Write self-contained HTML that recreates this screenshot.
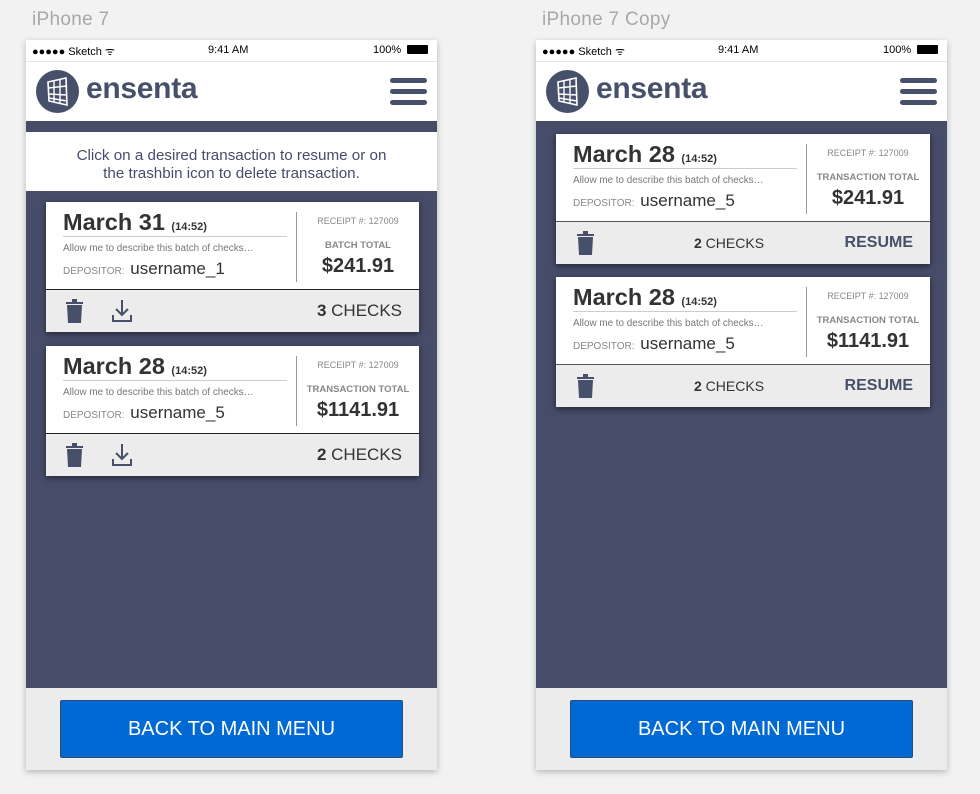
<!DOCTYPE html>
<html><head><meta charset="utf-8"><style>
*{margin:0;padding:0;box-sizing:border-box}
body{width:980px;height:794px;background:#f2f2f2;font-family:"Liberation Sans",Arial,sans-serif;position:relative;overflow:hidden}
.abs{position:absolute}
.lbl{font-size:19px;color:#a8a8a8;letter-spacing:.3px}
.phone{position:absolute;top:40px;width:411px;height:730px;background:#474c69;box-shadow:0 2px 6px rgba(0,0,0,.25)}
.sb{position:absolute;left:0;top:0;width:100%;height:22px;background:#fff;font-size:11px;color:#000;border-bottom:1px solid #e6e6e6}
.hdr{position:absolute;left:0;top:22px;width:100%;height:59px;background:#fff}
.logo{position:absolute;left:10px;top:8px;width:43px;height:43px;border-radius:50%;background:#47506a}
.brand{position:absolute;left:60px;top:10px;font-size:30px;font-weight:bold;color:#47506a;letter-spacing:-.3px}
.menu{position:absolute;right:10px;top:16px;width:37px}
.menu i{display:block;height:5px;border-radius:3px;background:#47506a;margin-bottom:6px}
.bottom{position:absolute;left:0;top:648px;width:100%;height:82px;background:#ececec}
.btn{position:absolute;left:34px;top:12px;width:343px;height:58px;background:#0069d3;border:1px solid #2a4d7a;border-radius:2px;color:#fff;font-size:20px;text-align:center;line-height:56px}
.card{position:absolute;width:373px;height:130px;background:#fff;box-shadow:0 2px 6px rgba(0,0,0,.5)}
.card .t{position:absolute;left:17px;top:7px;font-size:23.5px;font-weight:bold;color:#333}
.card .t small{font-size:11px}
.card .ul{position:absolute;left:17px;top:34px;width:224px;height:1px;background:#ccc}
.card .d{position:absolute;left:17px;top:41px;font-size:9.9px;color:#777}
.card .dep{position:absolute;left:17px;top:57px;font-size:10px;color:#888}
.card .dep b{font-size:17px;color:#333;font-weight:normal;margin-left:3px}
.card .vl{position:absolute;left:250px;top:10px;width:1px;height:70px;background:#999}
.card .r{position:absolute;left:251px;width:122px;text-align:center;color:#888}
.card .foot{position:absolute;left:0;top:87px;width:100%;height:43px;background:#ececec;border-top:1px solid #222}
.trash{position:absolute;top:9px;width:17px;height:24px}
.chk{position:absolute;font-size:17px;color:#333}
.ins{position:absolute;left:0;top:92px;width:100%;height:59px;background:#fff;text-align:center;font-size:15.2px;color:#474c69;line-height:18px;padding-top:15px}
</style></head><body>
<div class="abs lbl" style="left:32px;top:9px">iPhone 7</div>
<div class="abs lbl" style="left:542px;top:9px">iPhone 7 Copy</div>

<!-- phone 1 -->
<div class="phone" style="left:26px">
 <div class="sb"><span class="abs" style="left:6px;top:4px">●●●●● Sketch ᯤ</span><span class="abs" style="left:182px;top:4px">9:41 AM</span><span class="abs" style="left:347px;top:4px">100%</span><span class="abs" style="left:381px;top:5px;width:21px;height:9px;background:#000;border-radius:1px"></span></div>
 <div class="hdr"><div class="logo"><svg width="43" height="43" viewBox="0 0 43 43"><path d="M12 12 L30 8 L31 35 L13 31 Z" fill="none" stroke="#fff" stroke-width="1.6"/><path d="M18 11v21M24 9.5v24M12.3 18l18.3-2M12.6 24l18.5 1M12.8 28l18.3 3" stroke="#fff" stroke-width="1.4" fill="none"/></svg></div><div class="brand">ensenta</div><div class="menu"><i></i><i></i><i></i></div></div>
 <div class="ins">Click on a desired transaction to resume or on<br>the trashbin icon to delete transaction.</div>
 <div class="card" style="left:20px;top:162px">
  <div class="t">March 31 <small>(14:52)</small></div><div class="ul"></div>
  <div class="d">Allow me to describe this batch of checks…</div>
  <div class="dep">DEPOSITOR: <b>username_1</b></div><div class="vl"></div>
  <div class="r" style="top:14px;font-size:9px">RECEIPT #: 127009</div>
  <div class="r" style="top:38px;font-size:9.5px;font-weight:bold">BATCH TOTAL</div>
  <div class="r" style="top:53px;font-size:20px;font-weight:bold;color:#333">$241.91</div>
  <div class="foot"><svg class="trash" style="left:20px" viewBox="0 0 17 24"><rect x="0" y="3" width="17" height="2" fill="#47506a"/><rect x="6" y="0" width="5" height="3" fill="#47506a"/><path d="M1 6h15l-1 18H2z" fill="#47506a"/></svg>
  <svg class="abs" style="left:65px;top:9px" width="22" height="24" viewBox="0 0 22 24"><path d="M11 1v15M5 10l6 6 6-6M2 16v6h18v-6" fill="none" stroke="#47506a" stroke-width="2"/></svg>
  <div class="chk" style="right:17px;top:11px"><b>3</b> CHECKS</div></div>
 </div>
 <div class="card" style="left:20px;top:306px">
  <div class="t">March 28 <small>(14:52)</small></div><div class="ul"></div>
  <div class="d">Allow me to describe this batch of checks…</div>
  <div class="dep">DEPOSITOR: <b>username_5</b></div><div class="vl"></div>
  <div class="r" style="top:14px;font-size:9px">RECEIPT #: 127009</div>
  <div class="r" style="top:38px;font-size:9.5px;font-weight:bold">TRANSACTION TOTAL</div>
  <div class="r" style="top:53px;font-size:20px;font-weight:bold;color:#333">$1141.91</div>
  <div class="foot"><svg class="trash" style="left:20px" viewBox="0 0 17 24"><rect x="0" y="3" width="17" height="2" fill="#47506a"/><rect x="6" y="0" width="5" height="3" fill="#47506a"/><path d="M1 6h15l-1 18H2z" fill="#47506a"/></svg>
  <svg class="abs" style="left:65px;top:9px" width="22" height="24" viewBox="0 0 22 24"><path d="M11 1v15M5 10l6 6 6-6M2 16v6h18v-6" fill="none" stroke="#47506a" stroke-width="2"/></svg>
  <div class="chk" style="right:17px;top:11px"><b>2</b> CHECKS</div></div>
 </div>
 <div class="bottom"><div class="btn">BACK TO MAIN MENU</div></div>
</div>

<!-- phone 2 -->
<div class="phone" style="left:536px">
 <div class="sb"><span class="abs" style="left:6px;top:4px">●●●●● Sketch ᯤ</span><span class="abs" style="left:182px;top:4px">9:41 AM</span><span class="abs" style="left:347px;top:4px">100%</span><span class="abs" style="left:381px;top:5px;width:21px;height:9px;background:#000;border-radius:1px"></span></div>
 <div class="hdr"><div class="logo"><svg width="43" height="43" viewBox="0 0 43 43"><path d="M12 12 L30 8 L31 35 L13 31 Z" fill="none" stroke="#fff" stroke-width="1.6"/><path d="M18 11v21M24 9.5v24M12.3 18l18.3-2M12.6 24l18.5 1M12.8 28l18.3 3" stroke="#fff" stroke-width="1.4" fill="none"/></svg></div><div class="brand">ensenta</div><div class="menu"><i></i><i></i><i></i></div></div>
 <div class="card" style="left:20px;top:94px;width:374px">
  <div class="t">March 28 <small>(14:52)</small></div><div class="ul"></div>
  <div class="d">Allow me to describe this batch of checks…</div>
  <div class="dep">DEPOSITOR: <b>username_5</b></div><div class="vl"></div>
  <div class="r" style="top:14px;font-size:9px">RECEIPT #: 127009</div>
  <div class="r" style="top:38px;font-size:9.5px;font-weight:bold">TRANSACTION TOTAL</div>
  <div class="r" style="top:53px;font-size:20px;font-weight:bold;color:#333">$241.91</div>
  <div class="foot" style="border-top-color:#555"><svg class="trash" style="left:21px" viewBox="0 0 17 24"><rect x="0" y="3" width="17" height="2" fill="#47506a"/><rect x="6" y="0" width="5" height="3" fill="#47506a"/><path d="M1 6h15l-1 18H2z" fill="#47506a"/></svg>
  <div class="chk" style="left:138px;top:13px;font-size:14px"><b>2</b> CHECKS</div>
  <div class="chk" style="right:17px;top:12px;font-size:16px;font-weight:bold;color:#47506a">RESUME</div></div>
 </div>
 <div class="card" style="left:20px;top:237px;width:374px">
  <div class="t">March 28 <small>(14:52)</small></div><div class="ul"></div>
  <div class="d">Allow me to describe this batch of checks…</div>
  <div class="dep">DEPOSITOR: <b>username_5</b></div><div class="vl"></div>
  <div class="r" style="top:14px;font-size:9px">RECEIPT #: 127009</div>
  <div class="r" style="top:38px;font-size:9.5px;font-weight:bold">TRANSACTION TOTAL</div>
  <div class="r" style="top:53px;font-size:20px;font-weight:bold;color:#333">$1141.91</div>
  <div class="foot" style="border-top-color:#555"><svg class="trash" style="left:21px" viewBox="0 0 17 24"><rect x="0" y="3" width="17" height="2" fill="#47506a"/><rect x="6" y="0" width="5" height="3" fill="#47506a"/><path d="M1 6h15l-1 18H2z" fill="#47506a"/></svg>
  <div class="chk" style="left:138px;top:13px;font-size:14px"><b>2</b> CHECKS</div>
  <div class="chk" style="right:17px;top:12px;font-size:16px;font-weight:bold;color:#47506a">RESUME</div></div>
 </div>
 <div class="bottom"><div class="btn">BACK TO MAIN MENU</div></div>
</div>
</body></html>
